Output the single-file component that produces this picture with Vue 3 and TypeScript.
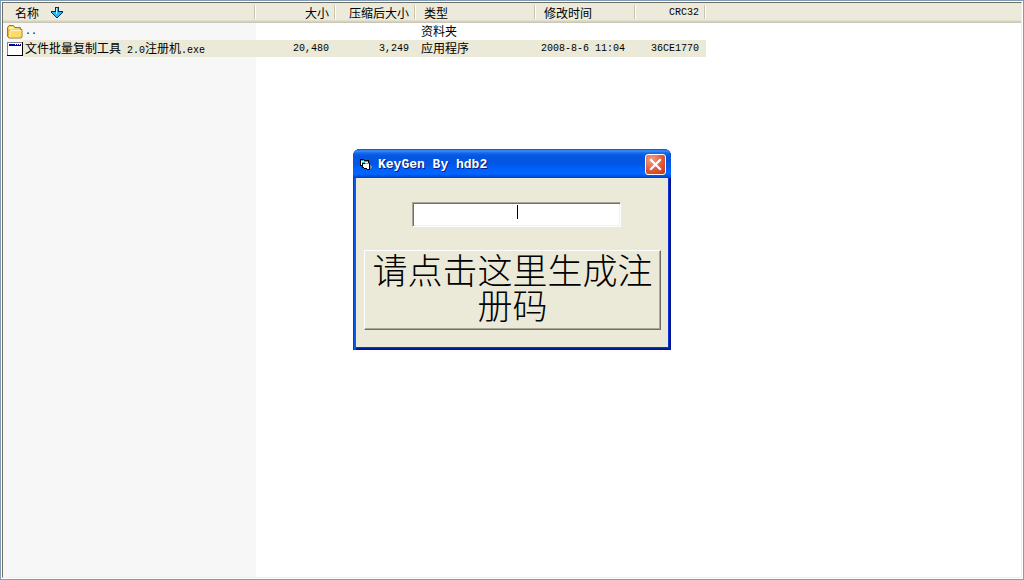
<script setup lang="ts">
import { ref } from 'vue'

interface Column {
  key: string
  label: string
  mono?: boolean
}

const columns: Column[] = [
  { key: 'name', label: '名称' },
  { key: 'size', label: '大小' },
  { key: 'packed', label: '压缩后大小' },
  { key: 'type', label: '类型' },
  { key: 'date', label: '修改时间' },
  { key: 'crc', label: 'CRC32', mono: true },
]

const code = ref('')
</script>

<template>
  <div class="screen">
    <main class="list">
      <table>
        <colgroup>
          <col v-for="c in columns" :key="c.key" :class="'w-' + c.key" />
          <col />
        </colgroup>
        <thead>
          <tr>
            <th v-for="c in columns" :key="c.key" scope="col" :class="['c-' + c.key, { mono: c.mono }]">
              <span class="head">{{ c.label }}<svg v-if="c.key === 'name'" class="sort" width="12" height="12" viewBox="0 0 12 12" shape-rendering="crispEdges">
                <path d="M4 0h4v4h4v2h-1v1h-1v1h-1v1h-1v1h-1v1h-2v-1h-1v-1h-1v-1h-1v-1h-1v-1h-1v-2h4z" fill="#002b6b" />
                <path d="M5 1h2v4h4v1h-1v1h-1v1h-1v1h-1v1h-2v-1h-1v-1h-1v-1h-1v-1h-1v-1h4z" fill="#28b8f0" />
                <path d="M5 1h1v6h-1z" fill="#b8f0ff" />
              </svg></span>
            </th>
            <th class="rest"></th>
          </tr>
        </thead>
        <tbody>
          <tr>
            <td class="c-name">
              <span class="file">
                <svg width="16" height="16" viewBox="0 0 16 16">
                  <path d="M.5 12.500V3.500L2 1.500h4.500L8 3.500h5.500v2h1.500v7.500l-1 1H2z" fill="#e8b32d" stroke="#a67c18" />
                  <path d="M1.500 4.500l1-2h3.500l1.500 2h5v1h-11z" fill="#fff2a5" />
                  <path d="M3 6h11.500v6.500l-1 1H2z" fill="#fbdc68" />
                  <path d="M3.500 6.500h10.500M3 7v5.500" stroke="#fff8c8" fill="none" />
                </svg>
                <span class="mono">..</span>
              </span>
            </td>
            <td></td>
            <td></td>
            <td class="c-type">资料夹</td>
            <td></td>
            <td></td>
            <td class="rest"></td>
          </tr>
          <tr class="selected">
            <td class="c-name">
              <span class="file">
                <svg width="16" height="16" viewBox="0 0 16 16" shape-rendering="crispEdges">
                  <path d="M0 1h16v14H0z" fill="#000" />
                  <path d="M0 1h15v13H0z" fill="#848284" />
                  <path d="M1 2h14v12H1z" fill="#fff" />
                  <path d="M2 3h12v2H2z" fill="#0000a8" />
                  <path d="M8 3h1v1h-1zM10 3h1v1h-1zM12 3h1v1h-1z" fill="#fff" />
                </svg>
                <span class="label">文件批量复制工具<span class="mono">&nbsp;2.0</span>注册机<span class="mono">.exe</span></span>
              </span>
            </td>
            <td class="c-size mono">20,480</td>
            <td class="c-packed mono">3,249</td>
            <td class="c-type">应用程序</td>
            <td class="c-date mono">2008-8-6 11:04</td>
            <td class="c-crc mono">36CE1770</td>
            <td class="rest"></td>
          </tr>
        </tbody>
      </table>
    </main>

    <div class="layer">
      <section class="dialog" role="dialog" aria-labelledby="dialog-title">
        <header class="titlebar">
          <svg width="13" height="13" viewBox="0 0 13 13" shape-rendering="crispEdges">
            <path d="M0 1h4v1h5v6H7v1H2V8H0z" fill="#000" />
            <path d="M1 2h3v1h4v1H4V3H1z" fill="#2cc4c4" />
            <path d="M1 3h3v1h4v3H1z" fill="#fff" />
            <path d="M2 4h3v1h5v7H7v-1H4v-1H2z" fill="#000" />
            <path d="M2 4h3v1h4v1H5V5H2z" fill="#2cc4c4" />
            <path d="M3 6h6v5H7v-1H4V9H3z" fill="#fff" />
            <path d="M10 7h1v1h1v2h-1v1h-1z" fill="#8a8a8a" />
          </svg>
          <h1 id="dialog-title">KeyGen By hdb2</h1>
          <button class="close" type="button" aria-label="Close">
            <svg width="13" height="13" viewBox="0 0 13 13">
              <path d="M2 2l9 9M11 2l-9 9" stroke="#fff" stroke-width="2.200" stroke-linecap="square" />
            </svg>
          </button>
        </header>
        <div class="body">
          <div class="field">
            <input v-model="code" type="text" aria-label="KeyGen" />
            <span class="caret"></span>
          </div>
          <button class="generate" type="button">请点击这里生成注册码</button>
        </div>
      </section>
    </div>
  </div>
</template>

<style>
body {
  margin: 0;
}
</style>

<style scoped>
* {
  box-sizing: border-box;
}

.screen {
  min-height: 100vh;
  display: flex;
  padding: 1px;
  border: 1px solid #7f9db9;
  background: #fff;
  color: #000;
  font: 12px/16px "Noto Sans CJK SC", sans-serif;
}

.list {
  flex: 1;
  border: 1px solid;
  border-color: #716f64 #f1efe2 #f1efe2 #716f64;
  background: linear-gradient(#f7f7f7, #f7f7f7) left / 253px 100% no-repeat #fff;
}

table {
  width: 100%;
  table-layout: fixed;
  border-collapse: collapse;
}

.w-name { width: 253px; }
.w-size { width: 80px; }
.w-packed { width: 80px; }
.w-type { width: 120px; }
.w-date { width: 100px; }
.w-crc { width: 70px; }

th,
td {
  padding: 0;
  text-align: left;
  font-weight: 400;
  white-space: nowrap;
}

thead tr {
  height: 20px;
  background: linear-gradient(#ebeadb 17px, #e2decd 17px, #e2decd 18px, #d6d2c2 18px, #d6d2c2 19px, #cbc7b8 19px);
}

th {
  background: linear-gradient(90deg, #c7c5b2 1px, #fff 1px) right 2px / 2px 14px no-repeat;
}

th.rest {
  background: none;
}

.head {
  display: flex;
  align-items: center;
}

.sort {
  margin-left: 12px;
}

td {
  height: 17px;
  line-height: 15px;
}

.selected td:not(.rest) {
  background: #ebe9d8;
}

.selected td.c-name {
  background: linear-gradient(#ebe9d8, #ebe9d8) 20px 0 no-repeat;
}

.mono {
  font-family: "Liberation Mono", monospace;
  font-size: 10px;
}

.c-size,
.c-packed,
.c-crc {
  text-align: right;
  padding-right: 7px;
}

.c-size .head,
.c-packed .head,
.c-crc .head {
  justify-content: flex-end;
}

th.c-name { padding-left: 12px; }
th.c-type { padding-left: 8px; }
th.c-date { padding-left: 8px; }
td.c-type { padding-left: 5px; padding-bottom: 2px; }
td.c-date { padding-left: 5px; }

.file {
  display: flex;
  align-items: center;
  gap: 2px;
  height: 17px;
  padding-left: 4px;
}

.layer {
  position: absolute;
  inset: 149px 0 auto;
  display: flex;
  justify-content: center;
}

.dialog {
  width: 318px;
  border-radius: 7px 7px 0 0;
  overflow: hidden;
  background: #0831d9;
  box-shadow: inset 1px 0 #0831d9, inset 3px 0 #0a5bf0, inset -1px -1px #00138c, inset -2px -2px #001ea0;
}

.titlebar {
  display: flex;
  align-items: center;
  height: 29px;
  padding: 2px 5px 0 7px;
  background: linear-gradient(#0a4fd0, #3f8df5 2px, #1269ee 4px, #0556e0 7px, #0254e3 14px, #0061fb 20px, #0066ff 25px, #0050e0 27px, #0040c8);
}

h1 {
  flex: 1;
  margin: 0 0 0 5px;
  color: #fff;
  font: bold 13px/18px "Liberation Mono", monospace;
  text-shadow: 1px 1px #0a1883;
}

.close {
  display: grid;
  place-items: center;
  width: 21px;
  height: 21px;
  padding: 0;
  border: 1px solid #fff;
  border-radius: 3px;
  background: radial-gradient(circle at 30% 25%, #f0a08a, #e0593a 55%, #c83410);
}

.body {
  display: flex;
  flex-direction: column;
  gap: 23px;
  margin: 0 3px 3px;
  padding: 24px 7px 17px 8px;
  background: #ebe9d8;
}

.field {
  position: relative;
  margin: 0 40px 0 48px;
  display: flex;
}

input {
  width: 100%;
  height: 25px;
  padding: 0 2px;
  border: 1px solid;
  border-color: #aca899 #fff #fff #aca899;
  border-radius: 0;
  outline: none;
  background: #fff;
  box-shadow: inset 1px 1px #716f64, inset -1px -1px #f1efe2;
  font: 12px/16px "Liberation Mono", "Noto Sans CJK SC", monospace;
  text-align: center;
}

.caret {
  position: absolute;
  top: 3px;
  left: 50%;
  width: 1px;
  height: 14px;
  background: #000;
}

.generate {
  width: 100%;
  padding: 0 6px 8px;
  border: 1px solid;
  border-color: #fff #716f64 #716f64 #fff;
  border-radius: 0;
  background: #ebe9d8;
  box-shadow: inset -1px -1px #aca899;
  color: #000;
  font: 300 35px/35px "Noto Sans CJK SC", sans-serif;
}
</style>
